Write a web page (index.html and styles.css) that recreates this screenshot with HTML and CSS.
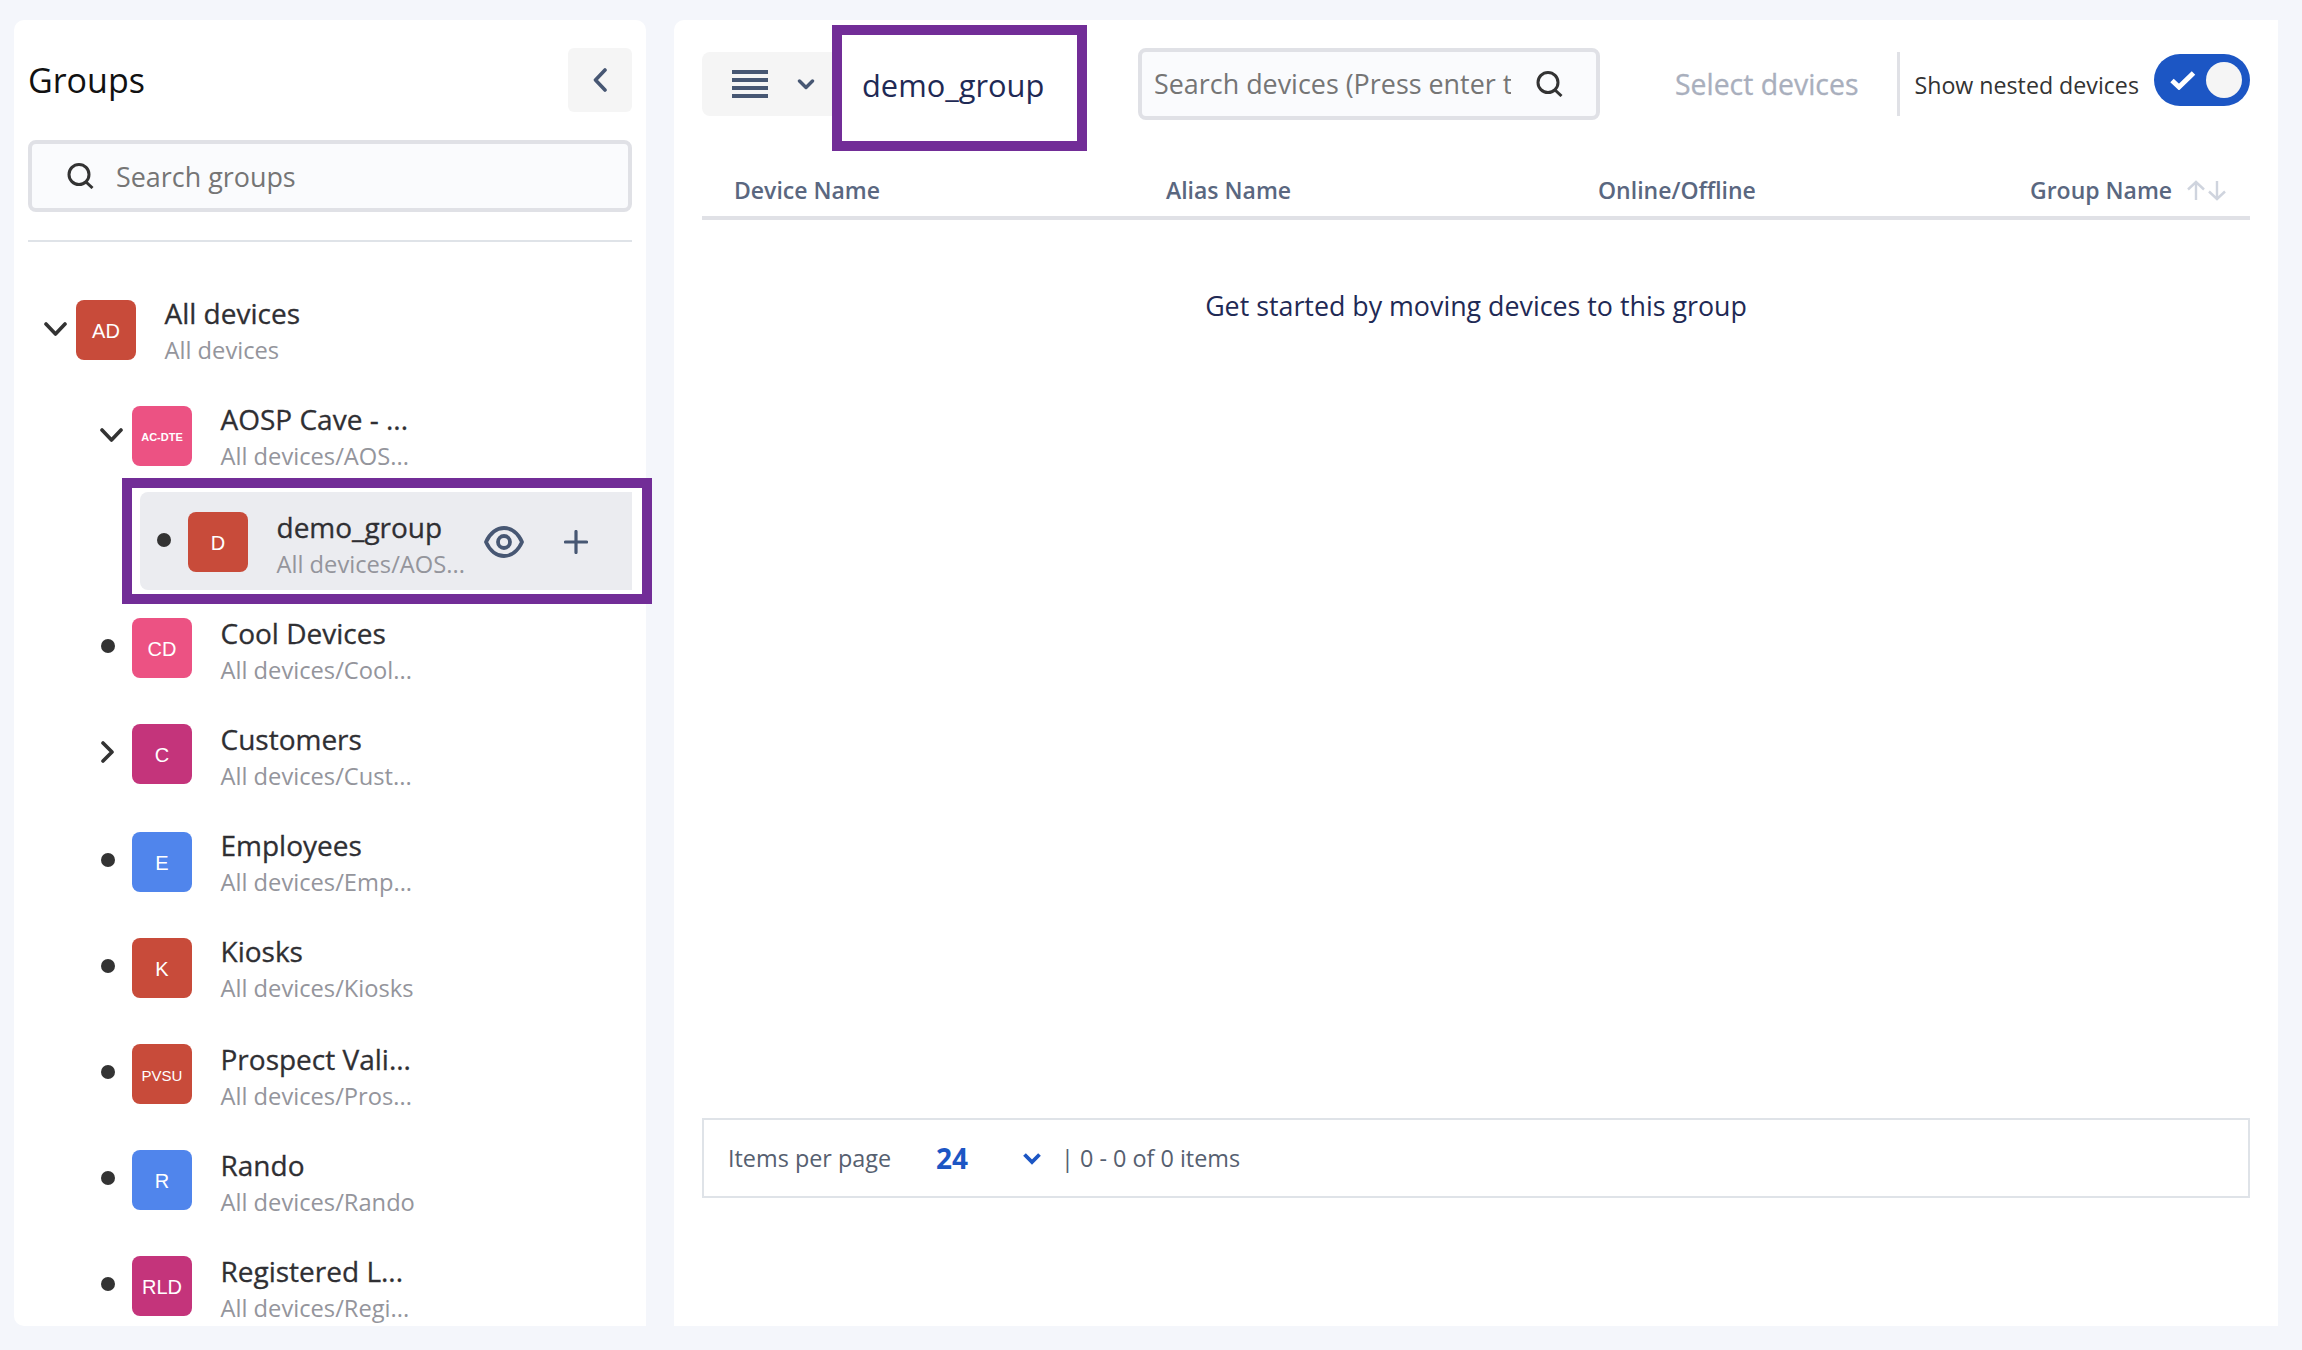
FILE: index.html
```html
<!DOCTYPE html>
<html lang="en">
<head>
    <meta charset="UTF-8">
    <title>Groups</title>
    <link rel="stylesheet" href="styles.css">
</head>
<body>
    <div class="page">
        <aside class="groups">
            <div class="groups-head">
                <h1>Groups</h1>
                <button class="back-btn">
                    <svg width="14" height="24" viewBox="0 0 14 24"><path d="M12 2 2.5 12 12 22" fill="none" stroke="#475773" stroke-width="3.6" stroke-linecap="round" stroke-linejoin="round"/></svg>
                </button>
            </div>
            <div class="search search-groups">
                <svg class="search-icon" width="27" height="26" viewBox="0 0 27 26"><circle cx="12" cy="11.5" r="10" fill="none" stroke="#333" stroke-width="3"/><path d="M19 19l6.500 6" stroke="#333" stroke-width="3"/></svg>
                <span class="search-text">Search groups</span>
            </div>
            <div class="tree">
                <div class="row">
                    <span class="toggle"><svg class="chev-down" width="23" height="14" viewBox="0 0 23 14"><path d="M2 2l9.500 10L21 2" fill="none" stroke="#333" stroke-width="3.6" stroke-linecap="round" stroke-linejoin="round"/></svg></span>
                    <span class="avatar red">AD</span>
                    <div class="row-text"><div class="row-name">All devices</div><div class="row-path">All devices</div></div>
                </div>
                <div class="row level-2">
                    <span class="toggle"><svg class="chev-down" width="23" height="14" viewBox="0 0 23 14"><path d="M2 2l9.500 10L21 2" fill="none" stroke="#333" stroke-width="3.6" stroke-linecap="round" stroke-linejoin="round"/></svg></span>
                    <span class="avatar pink tiny">AC-DTE</span>
                    <div class="row-text"><div class="row-name">AOSP Cave - ...</div><div class="row-path">All devices/AOS...</div></div>
                </div>
                <div class="row level-3 selected">
                    <span class="toggle"><span class="dot"></span></span>
                    <span class="avatar red">D</span>
                    <div class="row-text low"><div class="row-name">demo_group</div><div class="row-path">All devices/AOS...</div></div>
                    <div class="row-actions">
                        <svg width="40" height="32" viewBox="0 0 40 32"><path d="M2 16C6 7 13 2 20 2s14 5 18 14c-4 9-11 14-18 14S6 25 2 16Z" fill="none" stroke="#475773" stroke-width="3.8" stroke-linejoin="round"/><circle cx="20" cy="16" r="6" fill="none" stroke="#475773" stroke-width="3.8"/></svg>
                        <svg width="24" height="24" viewBox="0 0 24 24"><path d="M12 1.500v21M1.500 12h21" stroke="#475773" stroke-width="3.2" stroke-linecap="round"/></svg>
                    </div>
                    <span class="callout"></span>
                </div>
                <div class="row level-2">
                    <span class="toggle"><span class="dot"></span></span>
                    <span class="avatar pink">CD</span>
                    <div class="row-text low"><div class="row-name">Cool Devices</div><div class="row-path">All devices/Cool...</div></div>
                </div>
                <div class="row level-2 row-wide">
                    <span class="toggle"><svg class="chev-right" width="15" height="22" viewBox="0 0 15 22"><path d="M3 2l9 9-9 9" fill="none" stroke="#333" stroke-width="3.6" stroke-linecap="round" stroke-linejoin="round"/></svg></span>
                    <span class="avatar magenta">C</span>
                    <div class="row-text low"><div class="row-name">Customers</div><div class="row-path">All devices/Cust...</div></div>
                </div>
                <div class="row level-2">
                    <span class="toggle"><span class="dot"></span></span>
                    <span class="avatar blue">E</span>
                    <div class="row-text"><div class="row-name">Employees</div><div class="row-path">All devices/Emp...</div></div>
                </div>
                <div class="row level-2">
                    <span class="toggle"><span class="dot"></span></span>
                    <span class="avatar red">K</span>
                    <div class="row-text"><div class="row-name">Kiosks</div><div class="row-path">All devices/Kiosks</div></div>
                </div>
                <div class="row level-2">
                    <span class="toggle"><span class="dot"></span></span>
                    <span class="avatar red small">PVSU</span>
                    <div class="row-text low"><div class="row-name">Prospect Vali...</div><div class="row-path">All devices/Pros...</div></div>
                </div>
                <div class="row level-2">
                    <span class="toggle"><span class="dot"></span></span>
                    <span class="avatar blue">R</span>
                    <div class="row-text low"><div class="row-name">Rando</div><div class="row-path">All devices/Rando</div></div>
                </div>
                <div class="row level-2">
                    <span class="toggle"><span class="dot"></span></span>
                    <span class="avatar magenta">RLD</span>
                    <div class="row-text low"><div class="row-name">Registered L...</div><div class="row-path">All devices/Regi...</div></div>
                </div>
            </div>
        </aside>

        <main class="devices">
            <div class="toolbar">
                <button class="view-btn">
                    <svg width="36" height="28" viewBox="0 0 36 28"><path d="M0 2h36M0 10h36M0 18h36M0 26h36" stroke="#475773" stroke-width="4"/></svg>
                    <svg class="view-chev" width="18" height="11" viewBox="0 0 18 11"><path d="M2.500 2 9 8.500 15.500 2" fill="none" stroke="#475773" stroke-width="3.4" stroke-linecap="round" stroke-linejoin="round"/></svg>
                </button>
                <div class="group-title">demo_group</div>
                <div class="search search-devices">
                    <span class="search-text">Search devices (Press enter to search)</span>
                    <svg class="search-icon" width="27" height="26" viewBox="0 0 27 26"><circle cx="12" cy="11.5" r="10" fill="none" stroke="#333" stroke-width="3"/><path d="M19 19l6.500 6" stroke="#333" stroke-width="3"/></svg>
                </div>
                <span class="select-link">Select devices</span>
                <span class="toolbar-sep"></span>
                <span class="nested-label">Show nested devices</span>
                <span class="switch">
                    <svg width="28" height="20" viewBox="0 0 28 20"><path d="M3 10.500l7 6.500L24.500 3" fill="none" stroke="#fff" stroke-width="5"/></svg>
                    <span class="knob"></span>
                </span>
            </div>

            <div class="table-head">
                <div>Device Name</div>
                <div>Alias Name</div>
                <div>Online/Offline</div>
                <div class="sort-col">Group Name
                    <svg width="41" height="21" viewBox="0 0 41 21"><path d="M10 20V2M2 9.500 10 2l8 7.500M31 1v18M23 11.500 31 19l8-7.500" fill="none" stroke="#cfd4de" stroke-width="2.4"/></svg>
                </div>
            </div>
            <p class="empty">Get started by moving devices to this group</p>

            <div class="pager">
                <span class="pager-label">Items per page</span>
                <span class="pager-value">24</span>
                <svg class="pager-chev" width="20" height="13" viewBox="0 0 20 13"><path d="M2.500 2.500 10 10l7.500-7.500" fill="none" stroke="#1c56c4" stroke-width="3.8"/></svg>
                <span class="pager-count">| 0 - 0 of 0 items</span>
            </div>
        </main>
    </div>
</body>
</html>
```

FILE: styles.css
```css
/* General */
body {
    margin: 0;
    background: #f4f6fb;
    font-family: "Open Sans", sans-serif;
    color: #333;
    overflow: hidden;
}

.page {
    display: flex;
    gap: 28px;
    height: 1306px;
    padding: 20px 24px 24px 14px;
}

svg {
    display: block;
    flex: none;
}

button {
    border: 0;
    padding: 0;
    font: inherit;
}

/* Groups panel */
.groups {
    width: 604px;
    flex: none;
    padding: 28px 14px 0;
    background: #fff;
    border-radius: 10px 10px 0 10px;
}

.groups-head {
    display: flex;
    justify-content: space-between;
    align-items: center;
}

h1 {
    margin: 0;
    font-size: 34px;
    font-weight: 400;
    color: #111;
}

.back-btn {
    width: 64px;
    height: 64px;
    display: flex;
    align-items: center;
    justify-content: center;
    background: #f5f5f5;
    border-radius: 6px;
}

.search {
    height: 64px;
    display: flex;
    align-items: center;
    background: #fafbfd;
    border: 4px solid #e0e1e6;
    border-radius: 8px;
    overflow: hidden;
}

.search-text {
    font-size: 26.9px;
    color: #757575;
    white-space: nowrap;
}

.search-groups {
    margin-top: 28px;
    padding-left: 35px;
}

.search-groups .search-text {
    margin-left: 22px;
}

/* Tree */
.tree {
    margin-top: 28px;
    padding-top: 38px;
    border-top: 2px solid #dfe3e8;
}

.row {
    position: relative;
    display: flex;
    align-items: flex-start;
    height: 78px;
    padding: 20px 44px 0 16px;
    margin-bottom: 8px;
}

.row-wide {
    margin-bottom: 10px;
}

.level-2 {
    margin-left: 56px;
}

.level-3 {
    margin-left: 112px;
}

.toggle {
    width: 32px;
    flex: none;
}

.chev-down {
    margin-top: 22px;
}

.chev-right {
    margin-top: 17px;
}

.dot {
    display: block;
    width: 14px;
    height: 14px;
    margin: 21px 0 0 1px;
    border-radius: 50%;
    background: #333;
}

.avatar {
    width: 60px;
    height: 60px;
    flex: none;
    display: flex;
    align-items: center;
    justify-content: center;
    padding-top: 2px;
    box-sizing: border-box;
    border-radius: 8px;
    font-family: "Liberation Sans", sans-serif;
    font-size: 20px;
    color: #fff;
}

.avatar.small {
    font-size: 15px;
}

.avatar.tiny {
    font-size: 11px;
    font-weight: 700;
}

.red { background: #c84b3a; }
.pink { background: #ec5283; }
.magenta { background: #c4347b; }
.blue { background: #5085ec; }

.row-text {
    margin: -5px 0 0 28.5px;
}

.row-text.low {
    margin-top: -3px;
}

.row-name {
    font-size: 28px;
    line-height: 36px;
    font-weight: 500;
    color: #2f2f33;
    white-space: nowrap;
    -webkit-text-stroke: 0.3px #2f2f33;
}

.row-path {
    margin-top: 1px;
    font-size: 23.7px;
    line-height: 36px;
    color: #94959c;
    white-space: nowrap;
}

.selected {
    background: #ebecf0;
    border-radius: 8px 0 0 8px;
}

.row-actions {
    margin-left: auto;
    height: 60px;
    display: flex;
    align-items: center;
    gap: 40px;
}

/* purple box drawn over the selected row */
.callout {
    position: absolute;
    top: -14px;
    right: -20px;
    bottom: -14px;
    left: -18px;
    border: 10px solid #722d97;
    pointer-events: none;
}

/* Devices panel */
.devices {
    flex: 1;
    display: flex;
    flex-direction: column;
    padding: 28px 28px 128px;
    background: #fff;
    border-radius: 10px 0 0 0;
}

.toolbar {
    display: flex;
    align-items: center;
    height: 72px;
}

.view-btn {
    width: 130px;
    height: 64px;
    flex: none;
    display: flex;
    align-items: center;
    padding-left: 30px;
    box-sizing: border-box;
    background: #f5f5f5;
    border-radius: 8px 0 0 8px;
}

.view-chev {
    margin-left: 29px;
}

.group-title {
    width: 215px;
    height: 106px;
    flex: none;
    margin: -23px 0 -31px;
    padding-left: 20px;
    border: 10px solid #722d97;
    background: #fff;
    font-size: 30.8px;
    line-height: 100px;
    color: #1f2a55;
}

.search-devices {
    width: 462px;
    height: 72px;
    box-sizing: border-box;
    flex: none;
    margin-left: 51px;
    padding-left: 12px;
}

.search-devices .search-text {
    flex: 0 0 357px;
    overflow: hidden;
    margin-top: -2px;
}

.search-devices .search-icon {
    margin-left: 25px;
}

.select-link {
    margin-left: 75px;
    font-size: 28.4px;
    font-weight: 500;
    color: #a9afbd;
    white-space: nowrap;
    -webkit-text-stroke: 0.3px #a9afbd;
}

.toolbar-sep {
    width: 3px;
    height: 64px;
    margin-left: 39px;
    background: #e0e1e6;
}

.nested-label {
    margin: 2px 0 0 14px;
    font-size: 23.2px;
    white-space: nowrap;
}

.switch {
    position: relative;
    width: 96px;
    height: 52px;
    margin: -8px 0 0 auto;
    display: flex;
    align-items: center;
    padding-left: 15px;
    box-sizing: border-box;
    border-radius: 26px;
    background: #1c56c4;
}

.knob {
    position: absolute;
    top: 8px;
    right: 8px;
    width: 36px;
    height: 36px;
    border-radius: 50%;
    background: #f5f5f5;
}

/* Table */
.table-head {
    display: grid;
    grid-template-columns: 432px 432px 432px 1fr;
    padding: 52px 0 8px 32px;
    border-bottom: 4px solid #e0e1e6;
    font-size: 23px;
    font-weight: 600;
    line-height: 36px;
    color: #5a6780;
}

.sort-col {
    display: flex;
    align-items: center;
    justify-content: space-between;
    padding-right: 23px;
}

.empty {
    margin: 68px 0 0;
    text-align: center;
    font-size: 26.8px;
    line-height: 36px;
    color: #1f2a55;
}

.pager {
    margin-top: auto;
    height: 76px;
    display: flex;
    align-items: center;
    padding-left: 24px;
    border: 2px solid #dfe3e8;
    font-size: 23.4px;
    color: #566070;
}

.pager-label {
    width: 208px;
}

.pager-value {
    width: 86px;
    font-size: 28px;
    font-weight: 700;
    color: #1c56c4;
}

.pager-chev {
    margin-right: 19px;
}
```
